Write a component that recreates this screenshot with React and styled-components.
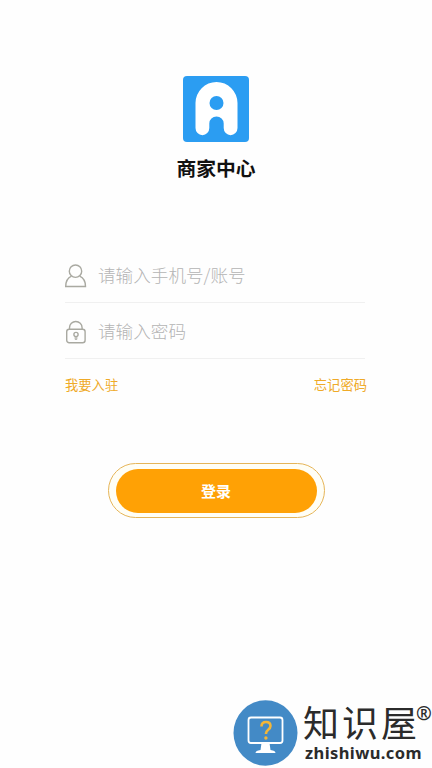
import React, { useState } from "react";
import styled, { createGlobalStyle } from "styled-components";

const GlobalStyle = createGlobalStyle`
  * {
    box-sizing: border-box;
  }
  body {
    margin: 0;
    background: #fefefe;
    font-family: "Noto Sans CJK SC", sans-serif;
  }
`;

const Page = styled.div`
  position: relative;
  display: flex;
  flex-direction: column;
  align-items: center;
  width: 432px;
  height: 768px;
  padding-top: 75px;
  overflow: hidden;
`;
const Logo = styled.svg`
  display: block;
  width: 68px;
  height: 68px;
`;
const Title = styled.h1`
  margin: 10px 0 0;
  font-size: 19.8px;
  line-height: 30px;
  font-weight: 700;
  color: #111;
`;
const Form = styled.form`
  display: flex;
  flex-direction: column;
  align-items: center;
  width: 302px;
  margin-top: 64px;
`;
const Field = styled.label`
  display: flex;
  align-items: center;
  align-self: flex-start;
  width: 300px;
  height: 56px;
  border-bottom: 1px solid #f0f0f0;
`;
const FieldIcon = styled.svg`
  flex: none;
  width: 23px;
  height: 24px;
  margin: 2px 10px 0 0;
  fill: none;
  stroke: #a9a9a1;
  stroke-width: 1.4;
`;
const Input = styled.input`
  flex: 1;
  min-width: 0;
  height: 30px;
  padding: 0;
  border: 0;
  outline: 0;
  background: none;
  font-family: inherit;
  font-size: 17.6px;
  font-weight: 300;
  color: #333;

  &::placeholder {
    color: #b4b4b4;
    opacity: 1;
  }
`;
const Links = styled.div`
  display: flex;
  justify-content: space-between;
  width: 302px;
  margin-top: 16px;
`;
const TextLink = styled.a`
  font-size: 13.3px;
  line-height: 20px;
  color: #efaa28;
  cursor: pointer;
`;
const ButtonRing = styled.div`
  width: 217px;
  height: 55px;
  margin-top: 68px;
  padding: 5px 7px;
  border: 1px solid #e6b558;
  border-radius: 28px;
  background: #fffef5;
`;
const Button = styled.button`
  display: block;
  width: 100%;
  height: 44px;
  padding: 0 0 2px;
  border: 0;
  border-radius: 22px;
  background: #ffa105;
  font-family: inherit;
  font-size: 15px;
  font-weight: 700;
  color: #fff;
`;

const Watermark = styled.div`
  position: absolute;
  left: 233px;
  bottom: 0;
  display: flex;
  width: 199px;
  height: 68px;
`;
const Badge = styled.svg`
  flex: none;
  width: 65px;
  height: 66px;
`;
const Brand = styled.div`
  display: flex;
  flex-direction: column;
  margin-left: 5px;
  color: #2b2b2b;
  white-space: nowrap;
`;
const BrandName = styled.div`
  display: flex;
  height: 43px;
  font-size: 36px;
  line-height: 43px;
  letter-spacing: 3px;
`;
const Registered = styled.span`
  margin-left: -4px;
  font-family: "Noto Sans", sans-serif;
  font-size: 19px;
  font-weight: 600;
  line-height: 26px;
  letter-spacing: 0;
`;
const Domain = styled.div`
  padding-left: 2px;
  font-family: "Noto Sans", sans-serif;
  font-size: 16.5px;
  font-weight: 700;
  line-height: 20px;
  letter-spacing: 0.4px;
`;

function App() {
  const [account, setAccount] = useState("");
  const [password, setPassword] = useState("");

  return (
    <Page>
      <GlobalStyle />
      <Logo viewBox="0 0 68 68">
        <rect x="1" y="1" width="66" height="66" rx="4" fill="#2b9df2" />
        <path
          d="M13.500 53V28a21 21 0 0 1 42 0v25a6.900 7.200 0 0 1-13.800 0v-4.500a7.200 7 0 0 0-14.400 0v4.500a6.900 7.200 0 0 1-13.800 0z"
          fill="#fff"
        />
        <circle cx="34.5" cy="28" r="7" fill="#2b9df2" />
      </Logo>
      <Title>商家中心</Title>

      <Form onSubmit={(e) => e.preventDefault()}>
        <Field>
          <FieldIcon viewBox="0 0 23 24">
            <circle cx="10.5" cy="7.2" r="6.2" />
            <path d="M6.5 12.2C2.5 14 .7 17 .7 22.5h19.8c0-5.5-1.8-8.5-5.8-10.3" />
          </FieldIcon>
          <Input
            placeholder="请输入手机号/账号"
            value={account}
            onChange={(e) => setAccount(e.target.value)}
          />
        </Field>
        <Field>
          <FieldIcon viewBox="0 0 23 24">
            <rect x="1.7" y="9.2" width="18.4" height="13.6" rx="2.5" />
            <path d="M4.5 9V7.8a6.3 6.3 0 0 1 12.6 0V9" />
            <circle cx="11" cy="14.5" r="2.1" />
            <path d="M10.2 16.4v3h1.6v-3" strokeWidth="1" />
          </FieldIcon>
          <Input
            type="password"
            placeholder="请输入密码"
            value={password}
            onChange={(e) => setPassword(e.target.value)}
          />
        </Field>
        <Links>
          <TextLink>我要入驻</TextLink>
          <TextLink>忘记密码</TextLink>
        </Links>
        <ButtonRing>
          <Button type="submit">登录</Button>
        </ButtonRing>
      </Form>

      <Watermark>
        <Badge viewBox="0 0 65 66">
          <ellipse cx="32.5" cy="33" rx="32" ry="32.7" fill="#438ac6" />
          <rect x="15.5" y="17.5" width="34" height="25.5" rx="2.5" fill="none" stroke="#fff" strokeWidth="1.8" />
          <path d="M28.5 43h8l1 7q5 .5 5 3h-20q0-2.500 5-3z" fill="#fff" />
          <path d="M28.5 26.5q0-4.500 4.500-4.500t4.500 4q0 2-2.300 3.700t-2.300 4.300" fill="none" stroke="#f3b638" strokeWidth="2.6" />
          <circle cx="32.9" cy="38" r="1.7" fill="#f3b638" />
        </Badge>
        <Brand>
          <BrandName>
            知识屋<Registered>®</Registered>
          </BrandName>
          <Domain>zhishiwu.com</Domain>
        </Brand>
      </Watermark>
    </Page>
  );
}

export default App;
